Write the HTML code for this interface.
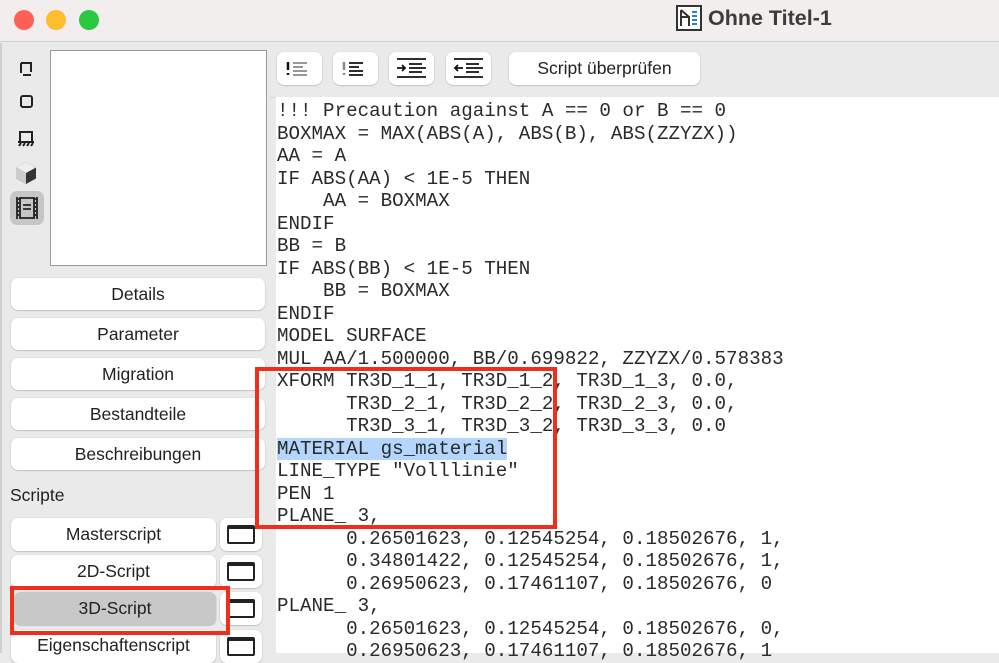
<!DOCTYPE html>
<html><head><meta charset="utf-8"><style>
*{margin:0;padding:0;box-sizing:border-box}
body{width:999px;height:653px;overflow:hidden;background:#ebeaea;font-family:"Liberation Sans",sans-serif;position:relative}
.title{position:absolute;left:0;top:0;width:999px;height:42px;background:#f2eeed;border-bottom:1px solid #d3d0cf}
.dot{position:absolute;top:10px;width:20px;height:20px;border-radius:50%}
.tt{position:absolute;left:708px;top:6px;font-size:21.5px;font-weight:bold;color:#3c3c3c}
.btn{position:absolute;background:#fff;border-radius:7px;box-shadow:0 0.5px 1.5px rgba(0,0,0,.3);font-size:17.5px;color:#222;text-align:center}
.code{position:absolute;left:276px;top:97px;width:723px;height:556px;background:#fff;font-family:"Liberation Mono",monospace;font-size:19.2px;line-height:22.5px;color:#2a2a2a;white-space:pre;padding:3px 0 0 1px}
.hl{background:#b4d6fd}
.red{position:absolute;border:4px solid #ef2f1c}
.icon{position:absolute;left:12px}
.win{position:absolute;left:220px;width:42px;height:33px;background:#fff;border-radius:7px;box-shadow:0 0.5px 1.5px rgba(0,0,0,.3)}
.win i{position:absolute;left:7px;top:7px;width:28px;height:19px;border:2px solid #222;border-top-width:4px;border-radius:2px}
</style></head><body>
<div class="title">
<div class="dot" style="left:14px;background:#fe5f57"></div>
<div class="dot" style="left:46px;background:#febc2e"></div>
<div class="dot" style="left:79px;background:#28c840"></div>
<svg style="position:absolute;left:676px;top:5px" width="26" height="26" viewBox="0 0 26 26"><rect x="1" y="1" width="24" height="24" fill="#fff" stroke="#333" stroke-width="2"/><path d="M5 5v16M5 12h8v9M5 5l8 7" stroke="#333" stroke-width="2" fill="none"/><path d="M16 7h5M16 11h5M16 15h5M16 19h5" stroke="#2a7de1" stroke-width="2"/></svg>
<div class="tt">Ohne Titel-1</div>
</div>
<div style="position:absolute;left:0;top:43px;width:2px;height:610px;background:#cfcfcf"></div>
<svg class="icon" style="top:58px" width="28" height="180" viewBox="0 0 28 180">
<path d="M9 5h10v9M9 5v10M11 17h8" stroke="#222" stroke-width="2" fill="none"/>
<rect x="9" y="38" width="11" height="11" rx="2" fill="none" stroke="#222" stroke-width="2"/>
<path d="M8 84v-10h12v10M6 84h16M7 88l2-3M11 88l2-3M15 88l2-3M19 88l2-3" stroke="#222" stroke-width="2" fill="none"/>
<path d="M14 104l10 5.5v11l-10 5.5-10-5.5v-11z" fill="#333"/><path d="M4 109.5l10 5.5 10-5.5-10-5.5z" fill="#eee"/><path d="M4 109.5l10 5.5v11l-10-5.5z" fill="#ccc"/>
</svg>
<div style="position:absolute;left:10px;top:191px;width:34px;height:34px;border-radius:7px;background:#c6c6c6"></div>
<svg style="position:absolute;left:13px;top:194px" width="28" height="28" viewBox="0 0 28 28"><path d="M4 3v22M24 3v22M7 3v22M21 3v22M4 5h3M4 9h3M4 13h3M4 17h3M4 21h3M21 5h3M21 9h3M21 13h3M21 17h3M21 21h3M7 4h14M7 24h14M10 11h8M10 15h8" stroke="#222" stroke-width="1.8" fill="none"/></svg>
<div style="position:absolute;left:50px;top:50px;width:217px;height:216px;background:#fff;border:1.5px solid #999"></div>
<div class="btn" style="left:11px;top:278px;width:254px;height:32px;line-height:32px">Details</div>
<div class="btn" style="left:11px;top:318px;width:254px;height:32px;line-height:32px">Parameter</div>
<div class="btn" style="left:11px;top:358px;width:254px;height:32px;line-height:32px">Migration</div>
<div class="btn" style="left:11px;top:398px;width:254px;height:32px;line-height:32px">Bestandteile</div>
<div class="btn" style="left:11px;top:438px;width:254px;height:32px;line-height:32px">Beschreibungen</div>
<div style="position:absolute;left:10px;top:485px;font-size:17.5px;color:#222">Scripte</div>
<div class="btn" style="left:11px;top:518px;width:205px;height:33px;line-height:33px">Masterscript</div>
<div class="btn" style="left:11px;top:555px;width:205px;height:33px;line-height:33px">2D-Script</div>
<div class="btn" style="left:14px;top:592px;width:202px;height:33px;line-height:33px;background:#c8c8c8">3D-Script</div>
<div class="btn" style="left:11px;top:630px;width:205px;height:33px;line-height:30px">Eigenschaftenscript</div>
<div class="win" style="top:518px"><i></i></div>
<div class="win" style="top:555px"><i></i></div>
<div class="win" style="top:592px"><i></i></div>
<div class="win" style="top:630px"><i></i></div>
<div class="red" style="left:10px;top:586px;width:220px;height:49px"></div>

<div class="btn" style="left:277px;top:52px;width:45px;height:33px"><svg width="45" height="33"><path d="M11 10v8M11 21v2" stroke="#111" stroke-width="2.5"/><path d="M16 11h14M16 15h10M16 19h14M16 23h14" stroke="#777" stroke-width="1.5"/></svg></div>
<div class="btn" style="left:333px;top:52px;width:45px;height:33px"><svg width="45" height="33"><path d="M11 10v8M11 21v2" stroke="#888" stroke-width="2.5"/><path d="M16 11h14M16 15h10M16 19h14M16 23h14" stroke="#111" stroke-width="1.8"/></svg></div>
<div class="btn" style="left:389px;top:52px;width:45px;height:33px"><svg width="45" height="33"><path d="M8 7h29M20 12h13M20 16h17M20 20h13M8 25h29M8 16h8M13 13l3 3-3 3" stroke="#111" stroke-width="1.8" fill="none"/></svg></div>
<div class="btn" style="left:446px;top:52px;width:45px;height:33px"><svg width="45" height="33"><path d="M8 7h29M20 12h13M20 16h17M20 20h13M8 25h29M9 16h8M12 13l-3 3 3 3" stroke="#111" stroke-width="1.8" fill="none"/></svg></div>
<div class="btn" style="left:509px;top:52px;width:191px;height:33px;line-height:33px">Script überprüfen</div>
<div style="position:absolute;left:270px;top:97px;width:729px;height:1px;background:#d5d5d5"></div>
<div class="code">!!! Precaution against A == 0 or B == 0
BOXMAX = MAX(ABS(A), ABS(B), ABS(ZZYZX))
AA = A
IF ABS(AA) &lt; 1E-5 THEN
    AA = BOXMAX
ENDIF
BB = B
IF ABS(BB) &lt; 1E-5 THEN
    BB = BOXMAX
ENDIF
MODEL SURFACE
MUL AA/1.500000, BB/0.699822, ZZYZX/0.578383
XFORM TR3D_1_1, TR3D_1_2, TR3D_1_3, 0.0,
      TR3D_2_1, TR3D_2_2, TR3D_2_3, 0.0,
      TR3D_3_1, TR3D_3_2, TR3D_3_3, 0.0
<span class="hl">MATERIAL gs_material</span>
LINE_TYPE "Volllinie"
PEN 1
PLANE_ 3,
      0.26501623, 0.12545254, 0.18502676, 1,
      0.34801422, 0.12545254, 0.18502676, 1,
      0.26950623, 0.17461107, 0.18502676, 0
PLANE_ 3,
      0.26501623, 0.12545254, 0.18502676, 0,
      0.26950623, 0.17461107, 0.18502676, 1</div>
<div class="red" style="left:255px;top:367px;width:302px;height:162px"></div>
</body></html>
